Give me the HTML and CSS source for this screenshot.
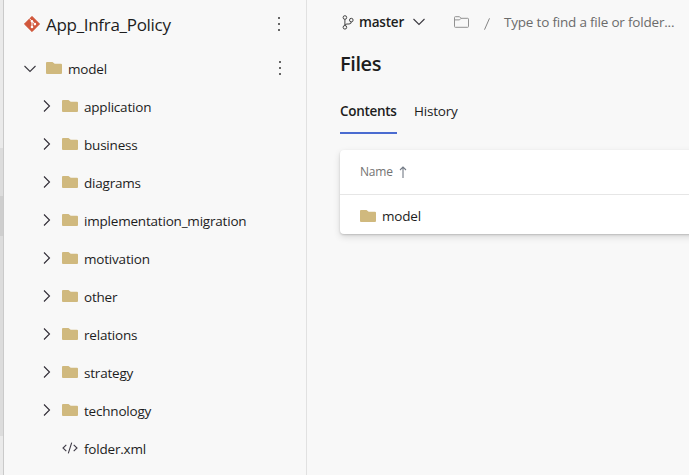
FILE: index.html
```
<!DOCTYPE html>
<html lang="en">
<head>
<meta charset="utf-8">
<title>App_Infra_Policy</title>
<link rel="stylesheet" href="styles.css">
</head>
<body>
<svg class="defs" width="0" height="0">
  <symbol id="folder" viewBox="0 0 16 12"><path d="M0 1Q0 0 1 0H6.5L8.7 1.8H15Q16 1.8 16 2.8V11Q16 12 15 12H1Q0 12 0 11Z" fill="#d0b97e"/></symbol>
  <symbol id="right" viewBox="0 0 8 12"><path d="M1 .5L6.5 6L1 11.5" fill="none" stroke="#302c36" stroke-width="1.1"/></symbol>
  <symbol id="down" viewBox="0 0 12 8"><path d="M.5 1L6 6.5L11.5 1" fill="none" stroke="#3b3940" stroke-width="1.1"/></symbol>
  <symbol id="dots" viewBox="0 0 2 14"><path d="M0 0h2v2H0zM0 6h2v2H0zM0 12h2v2H0z" fill="#666"/></symbol>
</svg>
<div class="app">
  <div class="rail"><div class="track"><div class="thumb"></div></div></div>
  <nav class="sidebar">
    <div class="repo">
      <svg class="git" viewBox="0 0 16 16"><path d="M8 .3L15.7 8L8 15.7L.3 8Z" fill="#d1573b" stroke="#d1573b" stroke-width=".7" stroke-linejoin="round"/><path d="M5.5 2.8L8 5.2V11M8 5.2L10.9 8" fill="none" stroke="#fff" stroke-width="1"/><circle cx="8" cy="5.2" r="1.2" fill="#fff"/><circle cx="8" cy="11" r="1.3" fill="#fff"/><circle cx="10.9" cy="8.1" r="1.3" fill="#fff"/></svg>
      <span class="repo-name">App_Infra_Policy</span>
      <svg class="dots"><use href="#dots"/></svg>
    </div>
    <div class="row root"><svg class="down"><use href="#down"/></svg><svg class="folder"><use href="#folder"/></svg><span>model</span><svg class="dots"><use href="#dots"/></svg></div>
    <div class="row"><svg class="right"><use href="#right"/></svg><svg class="folder"><use href="#folder"/></svg><span>application</span></div>
    <div class="row"><svg class="right"><use href="#right"/></svg><svg class="folder"><use href="#folder"/></svg><span>business</span></div>
    <div class="row"><svg class="right"><use href="#right"/></svg><svg class="folder"><use href="#folder"/></svg><span>diagrams</span></div>
    <div class="row"><svg class="right"><use href="#right"/></svg><svg class="folder"><use href="#folder"/></svg><span>implementation_migration</span></div>
    <div class="row"><svg class="right"><use href="#right"/></svg><svg class="folder"><use href="#folder"/></svg><span>motivation</span></div>
    <div class="row"><svg class="right"><use href="#right"/></svg><svg class="folder"><use href="#folder"/></svg><span>other</span></div>
    <div class="row"><svg class="right"><use href="#right"/></svg><svg class="folder"><use href="#folder"/></svg><span>relations</span></div>
    <div class="row"><svg class="right"><use href="#right"/></svg><svg class="folder"><use href="#folder"/></svg><span>strategy</span></div>
    <div class="row"><svg class="right"><use href="#right"/></svg><svg class="folder"><use href="#folder"/></svg><span>technology</span></div>
    <div class="row file"><svg class="code" viewBox="0 0 16 12"><path d="M4.3 2.8L1 6L4.3 9.2M11.7 2.8L15 6L11.7 9.2M9.7.6L6.3 11.4" fill="none" stroke="#3d3945" stroke-width="1.1"/></svg><span>folder.xml</span></div>
  </nav>
  <main class="content">
    <div class="path">
      <svg class="branch" viewBox="0 0 12 15"><g fill="none" stroke="#444" stroke-width="1"><circle cx="2.9" cy="2.5" r="1.8"/><circle cx="2.9" cy="12.3" r="1.8"/><circle cx="9.3" cy="5.1" r="1.8"/><path d="M2.9 4.3v6.2M9.3 6.9Q9.3 9 7 9H5Q2.9 9 2.9 10.5"/></g></svg>
      <span class="branch-name">master</span>
      <svg class="down"><use href="#down"/></svg>
      <svg class="outline" viewBox="0 0 15 12"><path d="M.5 10.5V1.5Q.5.7 1.3.7H5.5L7 2.3H13.7Q14.5 2.3 14.5 3.1V10.5Q14.5 11.3 13.7 11.3H1.3Q.5 11.3.5 10.5ZM.5 3.9H5.5L7 2.3" fill="none" stroke="#929292"/></svg>
      <svg class="slash" viewBox="0 0 6 12"><path d="M5.5 .3L.5 11.7" stroke="#858585" fill="none"/></svg>
      <span class="hint">Type to find a file or folder...</span>
    </div>
    <h1>Files</h1>
    <div class="tabs"><span class="tab active">Contents</span><span class="tab history">History</span></div>
    <section class="card">
      <div class="head"><span>Name</span><svg class="up" viewBox="0 0 8 12"><path d="M4 12V1M1 4L4 1L7 4" fill="none" stroke="#747b86" stroke-width="1.1"/></svg></div>
      <div class="item"><svg class="folder"><use href="#folder"/></svg><span>model</span></div>
    </section>
  </main>
</div>
</body>
</html>
```
FILE: styles.css
```
* { box-sizing: border-box; }
body { margin: 0; background: #f8f8f8; color: #1d1d1d; font: 13.5px/20px "Open Sans", "Noto Sans", sans-serif; letter-spacing: -.2px; overflow: hidden; }
.defs { position: absolute; }
svg { display: block; flex: none; }
span, h1 { white-space: nowrap; }
.app { display: flex; width: 689px; height: 475px; overflow: hidden; }
.rail { width: 4px; height: 475px; padding-top: 148px; background: #eaeaea; border-right: 1px solid #cacaca; flex: none; }
.track { height: 288px; padding-top: 48px; background: #dcdcdc; }
.thumb { height: 40px; background: #cecece; }
.sidebar { width: 303px; border-right: 1px solid #e1e1e1; flex: none; }
.repo { display: flex; align-items: center; height: 50px; padding: 0 26px 0 20px; margin-bottom: 0; }
.git { width: 16px; height: 16px; margin-top: -2px; }
.repo-name { font-size: 17px; line-height: 24px; letter-spacing: -.3px; margin-left: 6px; }
.dots { width: 2px; height: 14px; margin-left: auto; margin-top: -2px; }
.row { display: flex; align-items: center; height: 38px; padding-left: 39px; }
.row.root { padding: 0 25px 0 20px; }
.row span { margin-left: 6px; }
.folder { width: 16px; height: 12px; margin-top: -2px; }
.right { width: 8px; height: 12px; margin: -2px 11px 0 0; }
.down { width: 12px; height: 8px; }
.root .down { margin: -1px 10px 0 0; }
.row.file { padding-left: 58px; }
.code { width: 16px; height: 12px; margin-top: -2px; }
.content { width: 382px; flex: none; padding-left: 33px; }
.path { display: flex; align-items: center; height: 44px; }
.branch { width: 12px; height: 15px; margin-left: 2px; }
.branch-name { width: 43px; margin-left: 5px; font-weight: 600; }
.path .down { margin-left: 11px; }
.outline { width: 15px; height: 12px; margin-left: 29px; }
.slash { width: 6px; height: 12px; margin: 3px 0 0 15px; }
.hint { margin-left: 14px; color: #6b6b6b; }
h1 { margin: 6px 0 0; font-size: 20px; line-height: 28px; font-weight: 600; letter-spacing: -.4px; }
.tabs { display: flex; margin-top: 13px; height: 43px; }
.tab { height: 43px; line-height: 40px; }
.active { width: 57px; font-weight: 600; border-bottom: 2px solid #4a6bd0; letter-spacing: -.3px; }
.history { margin-left: 17px; }
.card { width: 360px; height: 84px; margin-top: 16px; background: #fff; border-radius: 4px; box-shadow: 0 3px 7px rgba(0,0,0,.13), 0 1px 2px rgba(0,0,0,.16); }
.head { display: flex; align-items: center; height: 45px; padding-left: 20px; border-bottom: 1px solid #e6e6e6; color: #737373; font-size: 12px; }
.up { width: 8px; height: 12px; margin-left: 6px; }
.item { display: flex; align-items: center; height: 39px; padding-left: 20px; }
.item .folder { margin-top: 2px; }
.item span { margin-left: 6px; margin-top: 2px; }
```
